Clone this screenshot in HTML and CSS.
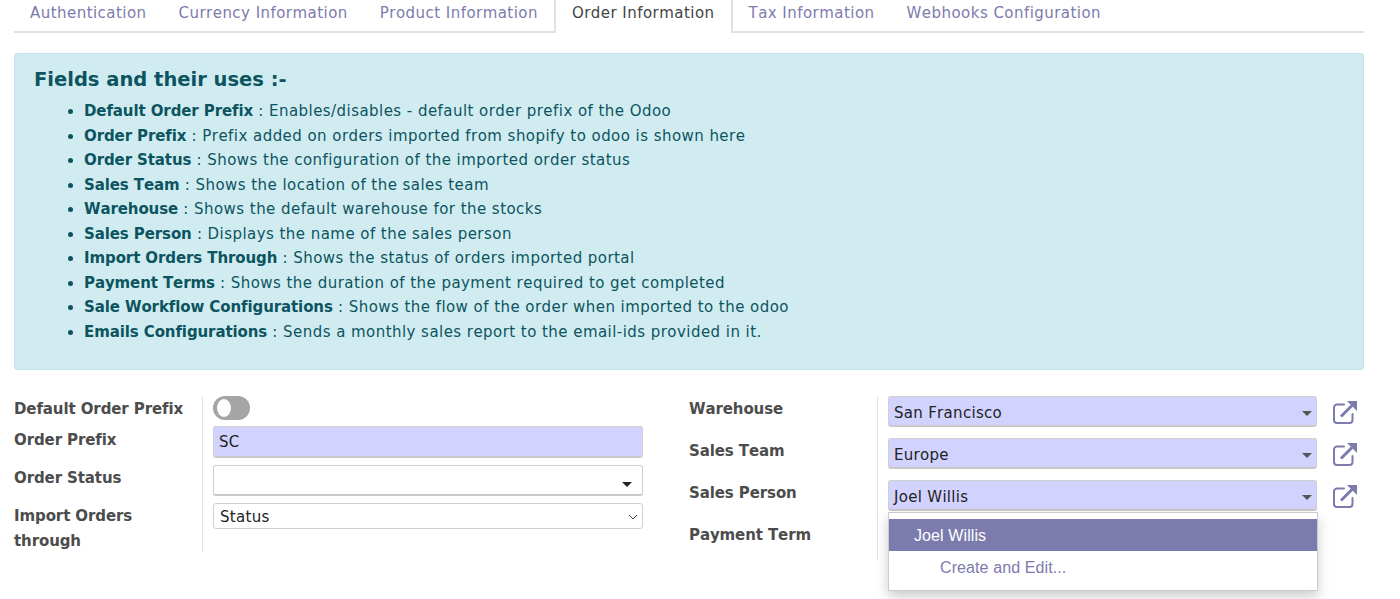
FILE: index.html
```html
<!DOCTYPE html>
<html lang="en">
<head>
<meta charset="utf-8">
<title>Order Information</title>
<link rel="stylesheet" href="styles.css">
</head>
<body>
<nav class="tabs">
  <a class="tab">Authentication</a>
  <a class="tab">Currency Information</a>
  <a class="tab">Product Information</a>
  <a class="tab active">Order Information</a>
  <a class="tab">Tax Information</a>
  <a class="tab">Webhooks Configuration</a>
</nav>
<section class="alert">
  <h3 class="alert-title">Fields and their uses :-</h3>
  <ul class="uses">
    <li><b>Default Order Prefix</b> : Enables/disables - default order prefix of the Odoo</li>
    <li><b>Order Prefix</b> : Prefix added on orders imported from shopify to odoo is shown here</li>
    <li><b>Order Status</b> : Shows the configuration of the imported order status</li>
    <li><b>Sales Team</b> : Shows the location of the sales team</li>
    <li><b>Warehouse</b> : Shows the default warehouse for the stocks</li>
    <li><b>Sales Person</b> : Displays the name of the sales person</li>
    <li><b>Import Orders Through</b> : Shows the status of orders imported portal</li>
    <li><b>Payment Terms</b> : Shows the duration of the payment required to get completed</li>
    <li><b>Sale Workflow Configurations</b> : Shows the flow of the order when imported to the odoo</li>
    <li><b>Emails Configurations</b> : Sends a monthly sales report to the email-ids provided in it.</li>
  </ul>
</section>
<section class="form">
  <div class="group group-left">
    <div class="labels">
      <label class="lbl lbl-a">Default Order Prefix</label>
      <label class="lbl lbl-b">Order Prefix</label>
      <label class="lbl lbl-c">Order Status</label>
      <label class="lbl lbl-d">Import Orders through</label>
    </div>
    <div class="fields">
      <span class="toggle"><span class="knob"></span></span>
      <div class="input req">SC</div>
      <div class="input combo"><span class="caret dark"></span></div>
      <div class="input native">Status
        <svg class="chev" viewBox="0 0 10 6" width="10" height="6"><path d="M1 1l4 4 4-4" fill="none" stroke="#444" stroke-width="1"/></svg>
      </div>
    </div>
  </div>
  <div class="group group-right">
    <div class="labels">
      <label class="lbl">Warehouse</label>
      <label class="lbl">Sales Team</label>
      <label class="lbl">Sales Person</label>
      <label class="lbl">Payment Term</label>
    </div>
    <div class="fields">
      <div class="m2o">
        <div class="input req combo">San Francisco<span class="caret"></span></div>
        <svg class="ext" viewBox="0 0 26 24" width="26" height="24"><use href="#ext"/></svg>
      </div>
      <div class="m2o">
        <div class="input req combo">Europe<span class="caret"></span></div>
        <svg class="ext" viewBox="0 0 26 24" width="26" height="24"><use href="#ext"/></svg>
      </div>
      <div class="m2o">
        <div class="input req combo">Joel Willis<span class="caret"></span></div>
        <svg class="ext" viewBox="0 0 26 24" width="26" height="24"><use href="#ext"/></svg>
      </div>
    </div>
    <ul class="menu">
      <li class="menu-item selected">Joel Willis</li>
      <li class="menu-item create">Create and Edit...</li>
    </ul>
  </div>
</section>
<svg class="defs" width="0" height="0">
  <symbol id="ext" viewBox="0 0 26 24">
    <path d="M12 4.500H5a3 3 0 0 0-3 3V20a3 3 0 0 0 3 3h12.500a3 3 0 0 0 3-3v-6" fill="none" stroke="#7c7bad" stroke-width="2" stroke-linecap="round"/>
    <path d="M9 16.500L20 5.500" fill="none" stroke="#7c7bad" stroke-width="3"/>
    <path d="M15 1H25V11Z" fill="#7c7bad"/>
  </symbol>
</svg>
</body>
</html>
```
FILE: styles.css
```css
* { box-sizing: border-box; }
html, body { margin: 0; padding: 0; }
body {
  height: 599px;
  overflow: hidden;
  padding: 0 36px 0 14px;
  background: #fff;
  color: #444;
  font-family: "DejaVu Sans", sans-serif;
  font-size: 15px;
  font-kerning: none;
}
.tabs {
  display: flex;
  height: 33px;
  border-bottom: 2px solid #dee2e6;
  margin-bottom: 20px;
}
.tab {
  padding: 0 16px;
  line-height: 26px;
  color: #7c7bad;
  font-size: 15px;
  letter-spacing: 0.46px;
  white-space: nowrap;
}
.tab.active {
  color: #444;
  background: #fff;
  height: 33px;
  border: solid #dee2e6;
  border-width: 0 2px;
}
.alert {
  height: 317px;
  background: #d1ecf1;
  border: 1px solid #bee5eb;
  border-radius: 3px;
  color: #0c5460;
  padding: 12px 19px;
}
.alert-title {
  margin: 0;
  font-size: 19.500px;
  line-height: 27px;
  font-weight: 700;
}
.uses {
  margin: 6px 0 0;
  padding: 0 0 0 50px;
  font-size: 15px;
  letter-spacing: 0.45px;
}
.uses li { line-height: 24.500px; }
.uses b { font-weight: 700; letter-spacing: -0.1px; }
.form {
  display: flex;
  margin-top: 26px;
}
.group {
  display: flex;
  align-items: flex-start;
  position: relative;
}
.group-left { width: 675px; }
.labels {
  width: 189px;
  padding-top: 1px;
  border-right: 1px solid #dee2e6;
  font-weight: 700;
  letter-spacing: -0.1px;
  color: #4c4c4c;
}
.group-left .labels { height: 156px; }
.group-right .labels { height: 164px; }
.lbl { display: block; line-height: 24px; }
.lbl-b { margin-top: 7px; }
.lbl-c { margin-top: 14px; }
.lbl-d { margin-top: 14px; width: 160px; line-height: 25px; }
.group-right .lbl { height: 42px; }
.fields {
  width: 430px;
  margin-left: 10px;
  display: flex;
  flex-direction: column;
}
.group-right .fields { width: 470px; gap: 11px; }
.toggle {
  display: flex;
  align-items: center;
  width: 37px;
  height: 24px;
  border-radius: 12px;
  background: #a5a5a5;
  padding-left: 4px;
  margin-bottom: 6px;
}
.knob {
  width: 14px;
  height: 18px;
  border-radius: 50%;
  background: #fff;
}
.input {
  position: relative;
  width: 430px;
  height: 32px;
  line-height: 31px;
  padding-left: 5px;
  border: 1px solid #d0d0d0;
  border-bottom: 2px solid #c8c8c8;
  border-radius: 3px;
  background: #fff;
  color: #222;
  font-size: 15px;
  letter-spacing: 0.3px;
  margin-bottom: 7px;
}
.req { background: #d2d2ff; }
.combo { height: 31px; line-height: 32px; }
.native {
  height: 26px;
  line-height: 26px;
  border-bottom: 1px solid #d0d0d0;
  margin-bottom: 0;
  padding-left: 6px;
}
.caret {
  position: absolute;
  right: 4px;
  bottom: 9px;
  border: 5px solid transparent;
  border-top-color: #555;
  border-bottom-width: 0;
}
.caret.dark { border-top-color: #222; right: 10px; bottom: 7px; }
.chev { position: absolute; right: 4px; top: 10px; }
.m2o { display: flex; align-items: center; gap: 15px; }
.m2o .input { margin: 0; }
.ext { flex: none; }
.defs { position: absolute; }
.menu {
  position: absolute;
  left: 199px;
  top: 116px;
  width: 430px;
  height: 79px;
  margin: 0;
  padding: 6px 0 0;
  list-style: none;
  background: #fff;
  border: 1px solid #ccc;
  box-shadow: 0 6px 12px rgba(0, 0, 0, 0.2);
  font-family: "Liberation Sans", Arial, sans-serif;
  font-size: 16px;
  letter-spacing: 0.1px;
}
.menu-item { height: 32px; line-height: 33px; white-space: nowrap; }
.selected { background: #7c7bad; color: #fff; padding-left: 25px; }
.create { color: #7c7bad; padding-left: 51px; }
```
